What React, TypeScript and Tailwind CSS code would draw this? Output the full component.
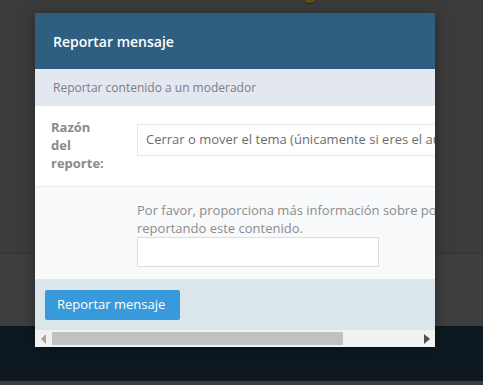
import React from 'react';

const font = { fontFamily: '"Open Sans", "Noto Sans", sans-serif' };

function ArrowLeft() {
  return (
    <svg viewBox="0 0 6 10" className="w-[6px] h-[10px]">
      <polygon points="5,0 5,10 0,5" fill="#a3a3a3" />
    </svg>
  );
}

function ArrowRight() {
  return (
    <svg viewBox="0 0 6 10" className="w-[6px] h-[10px]">
      <polygon points="0,0 0,10 6,5" fill="#505050" />
    </svg>
  );
}

export default function App() {
  return (
    <div className="relative w-[483px] h-[385px] overflow-hidden bg-[#3c3c3c]" style={font}>
      {/* page behind the overlay */}
      <div className="flex flex-col h-full">
        <div className="h-[254px] bg-[#3b3b3b] border-b border-[#343536]" />
        <div className="h-[72px] bg-[#3d3e3d]" />
        <div className="h-[55px] bg-[#0d1820]" />
        <div className="flex-1 bg-[#3c3c3c]" />
      </div>
      <div className="absolute left-[303px] top-[-6px] w-[14px] h-[10px] rounded-full bg-[#5a4a1e] border border-[#2a2412]" />

      {/* dialog */}
      <div className="absolute left-[35px] top-[13px] w-[400px] bg-white shadow-[0_2px_12px_rgba(0,0,0,0.35)] flex flex-col">
        <div className="overflow-hidden">
          <div className="w-[515px] flex flex-col">
            <div className="h-[56px] bg-[#2e5f80] flex items-center pl-[18px]">
              <h2 className="text-[14px] font-semibold text-white">Reportar mensaje</h2>
            </div>
            <div className="h-[37px] bg-[#e3e8f0] flex items-center pl-[18px]">
              <p className="text-[12px] text-[#7d7d80]">Reportar contenido a un moderador</p>
            </div>
            <div className="h-[81px] bg-white border-b border-[#e7eaee] flex pl-[16px] pt-[12px] gap-[26px]">
              <label className="w-[60px] text-[13px] font-bold leading-[18px] text-[#8a8a8a]">
                Razón del reporte:
              </label>
              <div className="mt-[6px] h-[32px] flex-1 border border-[#e6e6e6] flex items-center pl-[8px] whitespace-nowrap overflow-hidden">
                <span className="text-[13px] text-[#6d6d6d]">
                  Cerrar o mover el tema (únicamente si eres el autor)
                </span>
              </div>
            </div>
            <div className="h-[93px] bg-[#f8f9fb] border-b border-[#e3e6ea] pl-[102px] pt-[14px] pr-[10px]">
              <p className="text-[13px] leading-[18px] text-[#8c8c8c]">
                Por favor, proporciona más información sobre por qué estás reportando este contenido.
              </p>
              <div className="w-[242px] h-[30px] bg-white border border-[#dcdcdc]" />
            </div>
            <div className="h-[50px] bg-[#dbe6ec] flex items-center pl-[10px]">
              <button className="h-[30px] w-[135px] rounded-[2px] bg-[#3899db] text-white text-[13px] text-left pl-[12px]">
                Reportar mensaje
              </button>
            </div>
          </div>
        </div>
        {/* horizontal scrollbar */}
        <div className="h-[17px] bg-[#f1f1f1] flex items-center">
          <div className="w-[17px] flex justify-center">
            <ArrowLeft />
          </div>
          <div className="flex-1 h-[13px]">
            <div className="w-[291px] h-[13px] bg-[#c1c1c1]" />
          </div>
          <div className="w-[17px] flex justify-center">
            <ArrowRight />
          </div>
        </div>
      </div>
    </div>
  );
}
